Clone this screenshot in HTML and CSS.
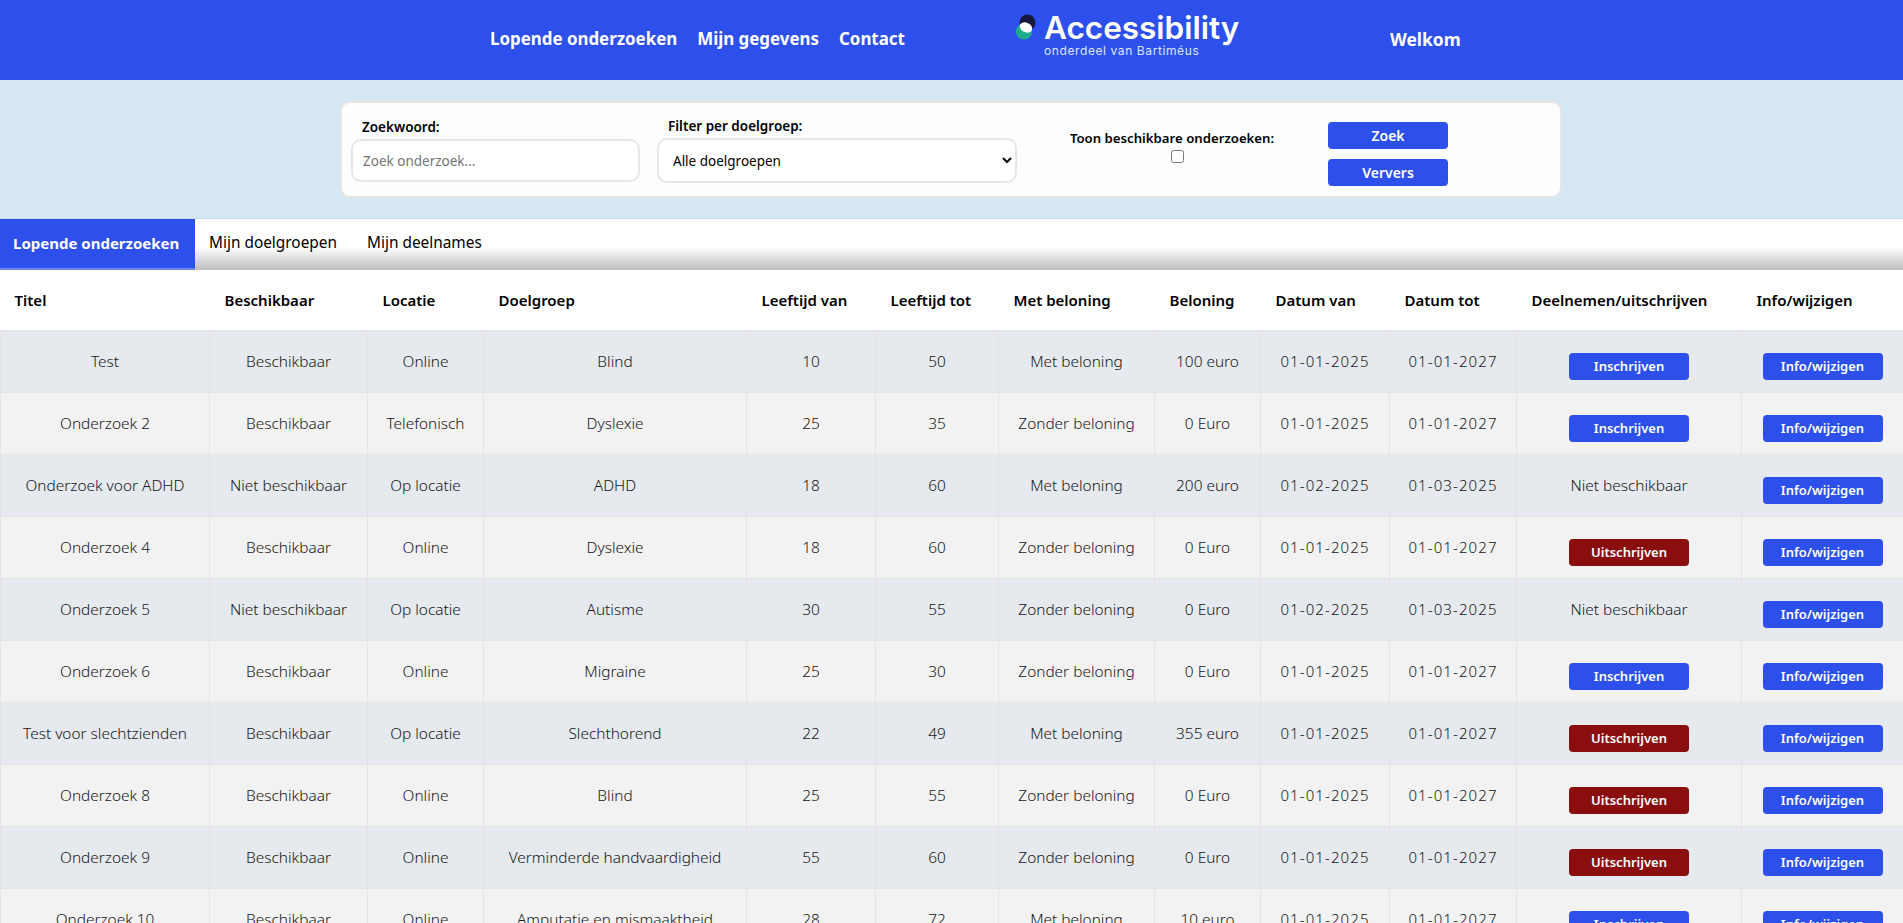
FILE: index.html
```html
<!DOCTYPE html>
<html lang="nl">
  <head>
    <meta charset="UTF-8" />
    <meta name="viewport" content="width=device-width, initial-scale=1.0" />
    <title>Lopende onderzoeken</title>
    <link rel="stylesheet" href="styles.css">
  </head>
  <body>
    <header class="topbar">
      <nav class="main-nav">
        <a href="#">Lopende onderzoeken</a>
        <a href="#">Mijn gegevens</a>
        <a href="#">Contact</a>
      </nav>
      <div class="logo">
        <svg class="logo-mark" width="20" height="26" viewBox="0 0 20 26">
          <circle cx="11.5" cy="8.5" r="8" fill="#14173f" />
          <circle cx="8" cy="17.5" r="8" fill="#1fae8b" />
          <ellipse cx="10" cy="13.5" rx="6.5" ry="4.8" transform="rotate(25 10 13.5)" fill="#ffffff" />
        </svg>
        <div class="logo-text">
          <span class="logo-name">Accessibility</span>
          <span class="logo-sub">onderdeel van Bartiméus</span>
        </div>
      </div>
      <a class="welcome" href="#">Welkom</a>
    </header>

    <section class="filter-band">
      <form class="filter-card" action="#">
        <div class="field field-search">
          <label for="search">Zoekwoord:</label>
          <input type="text" id="search" placeholder="Zoek onderzoek..." />
        </div>
        <div class="field field-select">
          <label for="group">Filter per doelgroep:</label>
          <select id="group">
            <option>Alle doelgroepen</option>
          </select>
        </div>
        <div class="field-check">
          <label for="available">Toon beschikbare onderzoeken:</label>
          <input type="checkbox" id="available" />
        </div>
        <div class="filter-buttons">
          <button class="btn" type="button">Zoek</button>
          <button class="btn" type="button">Ververs</button>
        </div>
      </form>
    </section>

    <div class="tabs">
      <a class="tab active" href="#">Lopende onderzoeken</a>
      <a class="tab" href="#">Mijn doelgroepen</a>
      <a class="tab" href="#">Mijn deelnames</a>
    </div>

    <table class="studies">
      <colgroup>
        <col class="c-title" />
        <col class="c-avail" />
        <col class="c-place" />
        <col class="c-group" />
        <col class="c-from" />
        <col class="c-to" />
        <col class="c-reward" />
        <col class="c-amount" />
        <col class="c-date1" />
        <col class="c-date2" />
        <col class="c-join" />
        <col class="c-info" />
      </colgroup>
      <thead>
        <tr>
          <th>Titel</th>
          <th>Beschikbaar</th>
          <th>Locatie</th>
          <th>Doelgroep</th>
          <th>Leeftijd van</th>
          <th>Leeftijd tot</th>
          <th>Met beloning</th>
          <th>Beloning</th>
          <th>Datum van</th>
          <th>Datum tot</th>
          <th>Deelnemen/uitschrijven</th>
          <th>Info/wijzigen</th>
        </tr>
      </thead>
      <tbody>
        <tr>
          <td>Test</td><td>Beschikbaar</td><td>Online</td><td>Blind</td><td>10</td><td>50</td><td>Met beloning</td><td>100 euro</td><td class="date">01-01-2025</td><td class="date">01-01-2027</td>
          <td><button class="btn btn-row" type="button">Inschrijven</button></td>
          <td><button class="btn btn-row" type="button">Info/wijzigen</button></td>
        </tr>
        <tr>
          <td>Onderzoek 2</td><td>Beschikbaar</td><td>Telefonisch</td><td>Dyslexie</td><td>25</td><td>35</td><td>Zonder beloning</td><td>0 Euro</td><td class="date">01-01-2025</td><td class="date">01-01-2027</td>
          <td><button class="btn btn-row" type="button">Inschrijven</button></td>
          <td><button class="btn btn-row" type="button">Info/wijzigen</button></td>
        </tr>
        <tr>
          <td>Onderzoek voor ADHD</td><td>Niet beschikbaar</td><td>Op locatie</td><td>ADHD</td><td>18</td><td>60</td><td>Met beloning</td><td>200 euro</td><td class="date">01-02-2025</td><td class="date">01-03-2025</td>
          <td>Niet beschikbaar</td>
          <td><button class="btn btn-row" type="button">Info/wijzigen</button></td>
        </tr>
        <tr>
          <td>Onderzoek 4</td><td>Beschikbaar</td><td>Online</td><td>Dyslexie</td><td>18</td><td>60</td><td>Zonder beloning</td><td>0 Euro</td><td class="date">01-01-2025</td><td class="date">01-01-2027</td>
          <td><button class="btn btn-row btn-leave" type="button">Uitschrijven</button></td>
          <td><button class="btn btn-row" type="button">Info/wijzigen</button></td>
        </tr>
        <tr>
          <td>Onderzoek 5</td><td>Niet beschikbaar</td><td>Op locatie</td><td>Autisme</td><td>30</td><td>55</td><td>Zonder beloning</td><td>0 Euro</td><td class="date">01-02-2025</td><td class="date">01-03-2025</td>
          <td>Niet beschikbaar</td>
          <td><button class="btn btn-row" type="button">Info/wijzigen</button></td>
        </tr>
        <tr>
          <td>Onderzoek 6</td><td>Beschikbaar</td><td>Online</td><td>Migraine</td><td>25</td><td>30</td><td>Zonder beloning</td><td>0 Euro</td><td class="date">01-01-2025</td><td class="date">01-01-2027</td>
          <td><button class="btn btn-row" type="button">Inschrijven</button></td>
          <td><button class="btn btn-row" type="button">Info/wijzigen</button></td>
        </tr>
        <tr>
          <td>Test voor slechtzienden</td><td>Beschikbaar</td><td>Op locatie</td><td>Slechthorend</td><td>22</td><td>49</td><td>Met beloning</td><td>355 euro</td><td class="date">01-01-2025</td><td class="date">01-01-2027</td>
          <td><button class="btn btn-row btn-leave" type="button">Uitschrijven</button></td>
          <td><button class="btn btn-row" type="button">Info/wijzigen</button></td>
        </tr>
        <tr>
          <td>Onderzoek 8</td><td>Beschikbaar</td><td>Online</td><td>Blind</td><td>25</td><td>55</td><td>Zonder beloning</td><td>0 Euro</td><td class="date">01-01-2025</td><td class="date">01-01-2027</td>
          <td><button class="btn btn-row btn-leave" type="button">Uitschrijven</button></td>
          <td><button class="btn btn-row" type="button">Info/wijzigen</button></td>
        </tr>
        <tr>
          <td>Onderzoek 9</td><td>Beschikbaar</td><td>Online</td><td>Verminderde handvaardigheid</td><td>55</td><td>60</td><td>Zonder beloning</td><td>0 Euro</td><td class="date">01-01-2025</td><td class="date">01-01-2027</td>
          <td><button class="btn btn-row btn-leave" type="button">Uitschrijven</button></td>
          <td><button class="btn btn-row" type="button">Info/wijzigen</button></td>
        </tr>
        <tr>
          <td>Onderzoek 10</td><td>Beschikbaar</td><td>Online</td><td>Amputatie en mismaaktheid</td><td>28</td><td>72</td><td>Met beloning</td><td>10 euro</td><td class="date">01-01-2025</td><td class="date">01-01-2027</td>
          <td><button class="btn btn-row" type="button">Inschrijven</button></td>
          <td><button class="btn btn-row" type="button">Info/wijzigen</button></td>
        </tr>
      </tbody>
    </table>
  </body>
</html>
```

FILE: styles.css
```css
* {
  box-sizing: border-box;
}
html,
body {
  height: 923px;
  overflow: hidden;
}
body {
  margin: 0;
  font-family: "Noto Sans", "Open Sans", sans-serif;
  font-size: 15px;
  color: #212529;
  background-color: white;
}
a {
  text-decoration: none;
}

/* top bar */
.topbar {
  height: 80px;
  background-color: #2d50ec;
  display: flex;
  align-items: center;
  padding-left: 490px;
}
.main-nav {
  display: flex;
  gap: 20px;
  width: 526px;
  margin-top: -3px;
}
.main-nav a {
  color: white;
  font-size: 16.9px;
  font-weight: 700;
}
.welcome {
  color: white;
  font-size: 17.4px;
  font-weight: 700;
  margin-left: 150px;
  margin-top: -3px;
}
.logo {
  display: flex;
  width: 224px;
  margin-top: -14px;
}
.logo-mark {
  flex-shrink: 0;
  margin-top: 5px;
  margin-right: 8px;
}
.logo-text {
  display: flex;
  flex-direction: column;
}
.logo-name {
  color: white;
  font-family: "Inter", sans-serif;
  font-size: 31.5px;
  font-weight: 600;
  line-height: 38px;
}
.logo-sub {
  color: #dfe5ff;
  font-family: "Inter", sans-serif;
  font-size: 12px;
  letter-spacing: 0.6px;
  line-height: 12px;
  margin-top: -2px;
}

/* filters */
.filter-band {
  height: 138px;
  padding: 21px 0 0 340px;
  background-color: #d6e7f4;
}
.filter-card {
  width: 1222px;
  height: 97px;
  padding: 0 9px;
  display: flex;
  background-color: #fcfdff;
  border: 2px solid #e8e6e3;
  border-radius: 10px;
}
.field {
  display: flex;
  flex-direction: column;
  padding-top: 15px;
}
.field label {
  font-size: 13.5px;
  line-height: 19px;
  font-weight: 600;
  color: black;
  padding-left: 11px;
}
.field-search {
  width: 289px;
}
.field-select {
  width: 360px;
  margin-left: 17px;
  padding-top: 14px;
}
.field input,
.field select {
  height: 43px;
  margin-top: 2px;
  padding: 0 10px;
  font-family: inherit;
  font-size: 13.5px;
  color: black;
  background-color: white;
  border: 2px solid #e8e6e3;
  border-radius: 10px;
}
.field select {
  height: 45px;
}
.field-check {
  width: 204px;
  margin-left: 53px;
  padding-top: 26px;
  display: flex;
  flex-direction: column;
  align-items: center;
  font-size: 13.2px;
  font-weight: 600;
  color: black;
  white-space: nowrap;
}
.field-check input {
  width: 13px;
  height: 13px;
  margin: 3px 0 0 10px;
}
.filter-buttons {
  margin-left: 54px;
  padding-top: 19px;
  display: flex;
  flex-direction: column;
  gap: 10px;
}
.btn {
  width: 120px;
  height: 27px;
  padding: 0;
  font-family: inherit;
  font-size: 14px;
  font-weight: 600;
  color: white;
  background-color: #2d50ec;
  border: none;
  border-radius: 4px;
}

/* tabs */
.tabs {
  height: 52px;
  display: flex;
  background: linear-gradient(to bottom, white 55%, #bdbdbd 100%);
  border-top: 1px solid #c9d8e4;
}
.tab {
  padding: 0 16px 0 14px;
  line-height: 48px;
  font-size: 15.4px;
  color: black;
  white-space: nowrap;
}
.tab.active {
  padding: 0 0 0 13px;
  width: 195px;
  font-size: 15px;
  font-weight: 700;
  color: white;
  background-color: #2d50ec;
  border-bottom: 2px solid #6f86f0;
}

/* table */
.studies {
  width: 1903px;
  table-layout: fixed;
  border-collapse: collapse;
}
.c-title { width: 209px; }
.c-avail { width: 158px; }
.c-place { width: 116px; }
.c-group { width: 263px; }
.c-from { width: 129px; }
.c-to { width: 123px; }
.c-reward { width: 156px; }
.c-amount { width: 106px; }
.c-date1 { width: 129px; }
.c-date2 { width: 127px; }
.c-join { width: 225px; }
.c-info { width: 162px; }
.studies th {
  height: 60px;
  padding: 0 0 0 15px;
  text-align: left;
  font-size: 15px;
  font-weight: 600;
  color: black;
  background-color: white;
  border-bottom: 1px solid #e3e3e3;
}
.studies th:first-child {
  padding-left: 14px;
}
.studies td {
  height: 62px;
  padding: 0 8px;
  text-align: center;
  font-size: 15.4px;
  font-weight: 300;
  color: #14171a;
  border: 1px solid #e4e4e4;
  border-top: none;
}
.studies tbody tr:nth-child(odd) td {
  background-color: #e6e9ed;
}
.studies tbody tr:nth-child(even) td {
  background-color: #f2f2f2;
}
.studies td.date {
  font-size: 15px;
  letter-spacing: 1.1px;
}
.btn-row {
  margin-top: 10px;
  font-size: 13px;
  vertical-align: middle;
}
.btn-leave {
  background-color: #8b0e0e;
}
```
